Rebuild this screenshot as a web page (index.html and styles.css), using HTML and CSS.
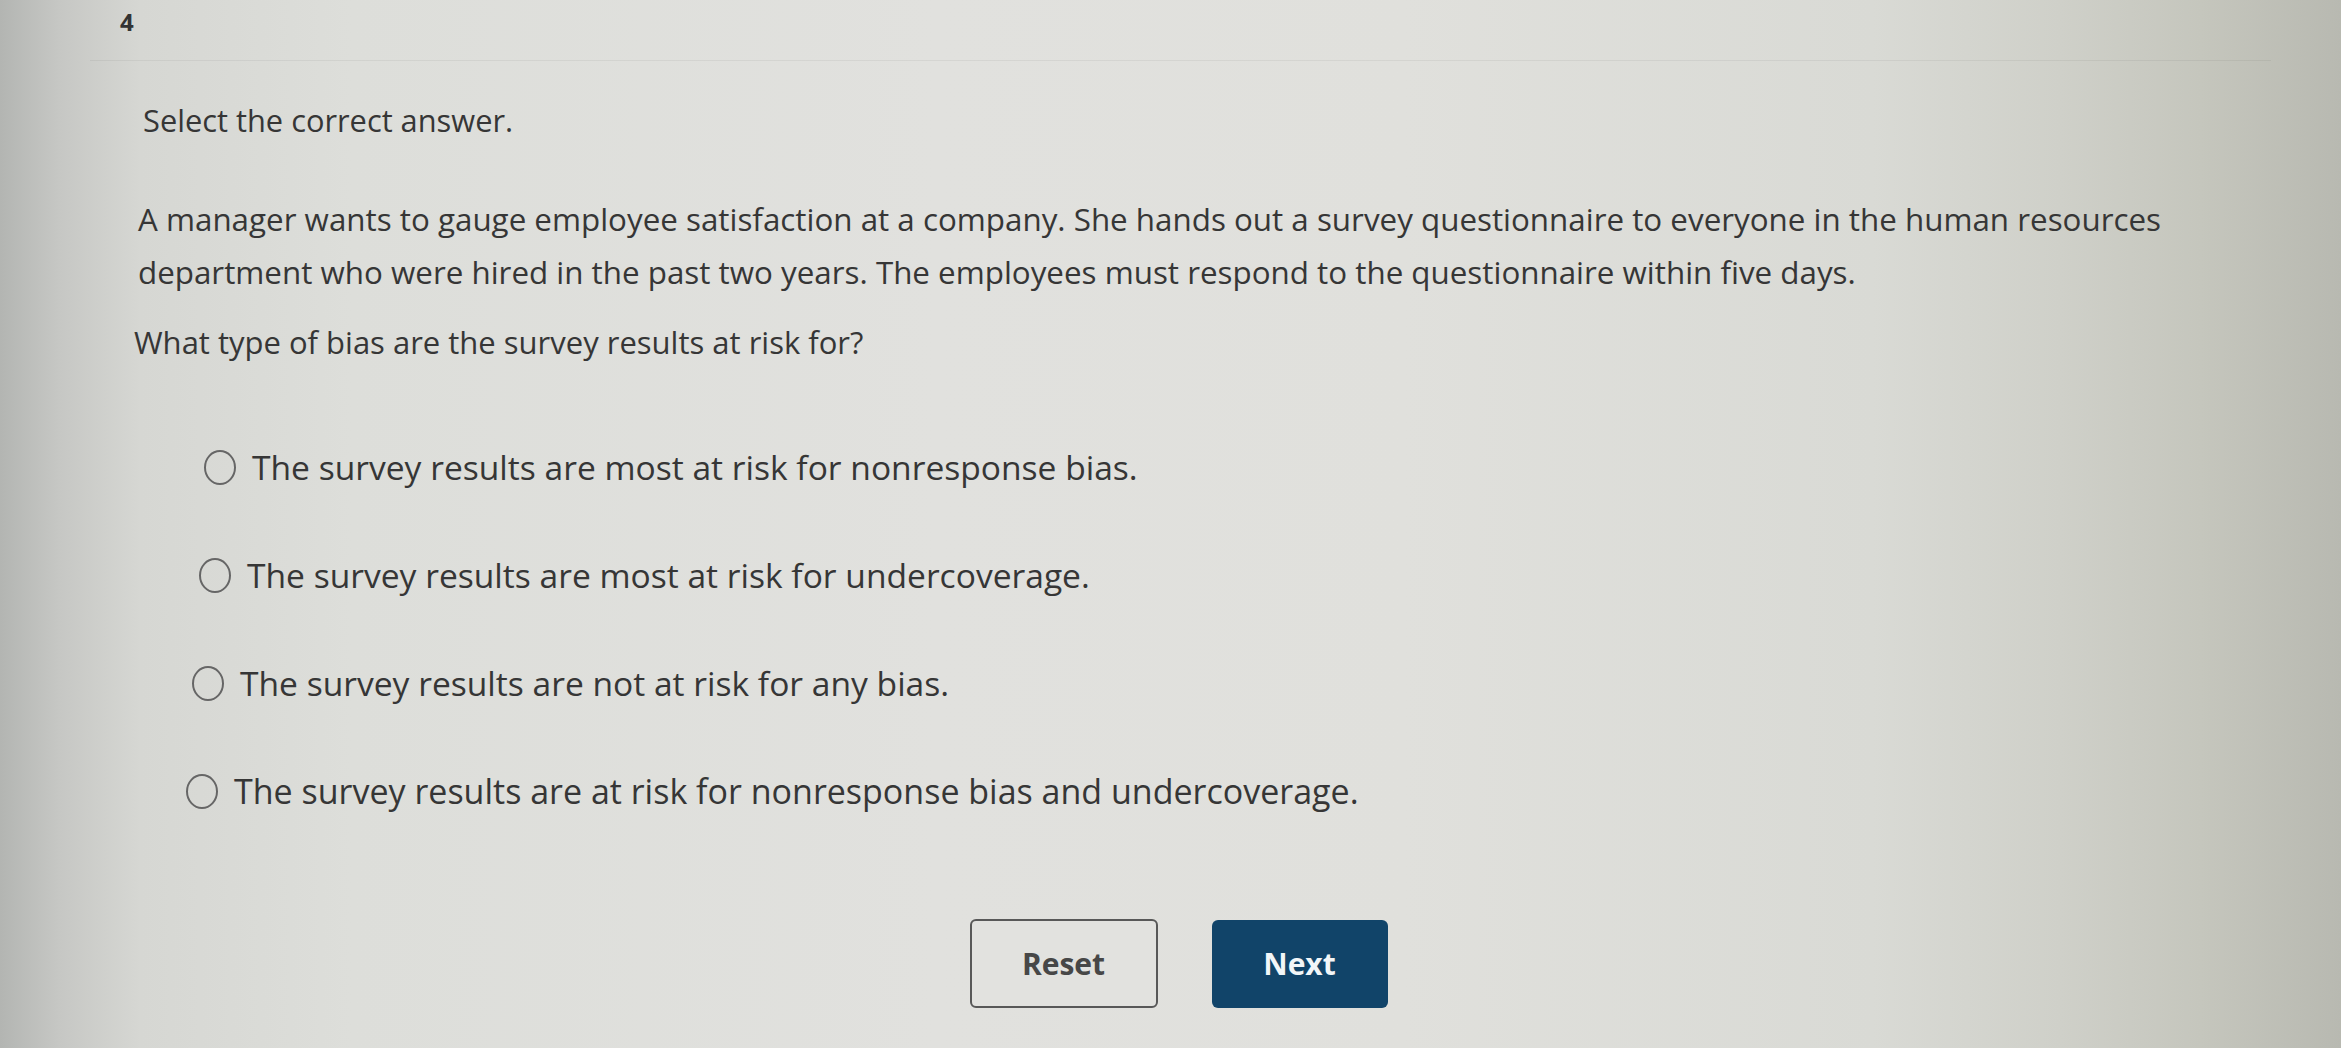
FILE: index.html
```html
<!DOCTYPE html>
<html lang="en">
<head>
<meta charset="utf-8">
<title>Question 4</title>
<link rel="stylesheet" href="styles.css">
</head>
<body>
<main class="page">
  <div class="qnum">4</div>
  <div class="divider"></div>
  <section class="question">
    <p class="instr">Select the correct answer.</p>
    <p class="stem">A manager wants to gauge employee satisfaction at a company. She hands out a survey questionnaire to everyone in the human resources department who were hired in the past two years. The employees must respond to the questionnaire within five days.</p>
    <p class="prompt">What type of bias are the survey results at risk for?</p>
    <div class="options">
      <label class="option o1"><span class="radio"></span><span class="otext">The survey results are most at risk for nonresponse bias.</span></label>
      <label class="option o2"><span class="radio"></span><span class="otext">The survey results are most at risk for undercoverage.</span></label>
      <label class="option o3"><span class="radio"></span><span class="otext">The survey results are not at risk for any bias.</span></label>
      <label class="option o4"><span class="radio"></span><span class="otext">The survey results are at risk for nonresponse bias and undercoverage.</span></label>
    </div>
  </section>
  <div class="actions">
    <button class="btn btn-reset">Reset</button>
    <button class="btn btn-next">Next</button>
  </div>
</main>
</body>
</html>
```
FILE: styles.css
```css
html, body {
  margin: 0;
  padding: 0;
  height: 100%;
}
body {
  font-family: "Open Sans", "Liberation Sans", sans-serif;
  color: #363636;
  background: linear-gradient(to right, #b3b5b2 0%, #c6c7c4 2.5%, #d6d7d3 6%, #dddeda 15%, #e1e1de 40%, #e0e0dc 60%, #d9dad5 80%, #cfd0c9 88%, #c5c6bd 94%, #b8b9b1 100%);
  overflow: hidden;
}
.page {
  height: 1048px;
  box-sizing: border-box;
  padding-top: 7px;
}
.qnum {
  font-size: 24px;
  font-weight: 700;
  line-height: 30px;
  margin-left: 120px;
  color: #333;
}
.divider {
  margin: 23px 70px 0 90px;
  border-top: 1px solid rgba(0, 0, 0, 0.05);
}
.question {
  padding-left: 138px;
}
.instr {
  margin: 39px 0 0 5px;
  font-size: 30.8px;
  line-height: 40px;
}
.stem {
  margin: 52px 0 0 0;
  font-size: 31.35px;
  line-height: 53px;
  width: 2060px;
}
.prompt {
  margin: 18px 0 0 -4px;
  font-size: 31px;
  line-height: 52px;
}
.options {
  margin-top: 45px;
  padding-left: 58px;
}
.option {
  display: flex;
  align-items: center;
  gap: 16px;
  padding: 28px 0;
  font-size: 33.6px;
  line-height: 52px;
}
.o1 { margin-left: 8px; }
.o2 { margin-left: 3px; }
.o3 { margin-left: -4px; }
.o4 { margin-left: -10px; font-size: 34px; }
.radio {
  width: 28px;
  height: 31px;
  border: 2.5px solid #666;
  border-radius: 50%;
  flex: none;
}
.actions {
  display: flex;
  align-items: center;
  justify-content: center;
  gap: 54px;
  margin-top: 74px;
  padding-left: 16px;
}
.btn {
  font-family: "Open Sans", "Liberation Sans", sans-serif;
  font-size: 30px;
  font-weight: 700;
  border-radius: 6px;
  cursor: pointer;
}
.btn-reset {
  width: 188px;
  height: 89px;
  background: #e2e2df;
  border: 2.5px solid #585858;
  color: #474747;
}
.btn-next {
  width: 176px;
  height: 88px;
  background: #114469;
  border: none;
  color: #f2f6f8;
}
```
